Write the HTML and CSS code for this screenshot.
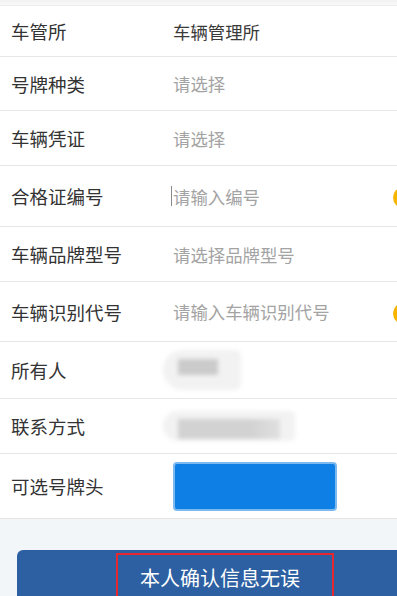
FILE: index.html
```html
<!DOCTYPE html>
<html lang="zh-CN">
<head>
    <meta charset="UTF-8">
    <title>车辆信息确认</title>
    <link rel="stylesheet" href="styles.css">
</head>
<body>
    <div class="page">
        <div class="top-strip"></div>
        <div class="form">
            <div class="row row-h50">
                <div class="label">车管所</div>
                <div class="value">车辆管理所</div>
            </div>
            <div class="row row-h54">
                <div class="label">号牌种类</div>
                <div class="value placeholder">请选择</div>
            </div>
            <div class="row">
                <div class="label">车辆凭证</div>
                <div class="value placeholder">请选择</div>
            </div>
            <div class="row row-h61">
                <div class="label">合格证编号</div>
                <div class="value placeholder"><span class="caret"></span>请输入编号</div>
                <span class="dot"></span>
            </div>
            <div class="row">
                <div class="label">车辆品牌型号</div>
                <div class="value placeholder">请选择品牌型号</div>
            </div>
            <div class="row row-h60">
                <div class="label">车辆识别代号</div>
                <div class="value placeholder">请输入车辆识别代号</div>
                <span class="dot"></span>
            </div>
            <div class="row row-h57">
                <div class="label">所有人</div>
                <div class="value">
                    <div class="smudge smudge-name"><div class="smudge-dark"></div></div>
                </div>
            </div>
            <div class="row">
                <div class="label">联系方式</div>
                <div class="value">
                    <div class="smudge smudge-phone"><div class="smudge-dark"></div></div>
                </div>
            </div>
            <div class="row row-h65">
                <div class="label">可选号牌头</div>
                <div class="value">
                    <div class="plate-box"></div>
                </div>
            </div>
        </div>
        <div class="footer">
            <button class="confirm-btn"><span class="mark">本人确认信息无误</span></button>
        </div>
    </div>
</body>
</html>
```

FILE: styles.css
```css
html, body {
    margin: 0;
    padding: 0;
    background-color: #f3f6f9;
}
body {
    font-family: "Noto Sans CJK SC", "Noto Sans", sans-serif;
    color: #333;
}
.page {
    height: 596px;
    overflow: hidden;
}
.top-strip {
    height: 6px;
    box-sizing: border-box;
    background: linear-gradient(#f1f1f1, #fafafa);
    border-bottom: 1px solid #ececec;
}
.form {
    background-color: #fff;
}
.row {
    position: relative;
    display: grid;
    grid-template-columns: 162px 1fr;
    align-items: center;
    height: 55px;
    box-sizing: border-box;
    padding-left: 11px;
    border-bottom: 1px solid #e6e6e6;
    overflow: hidden;
}
.row-h50 { height: 51px; }
.row-h54 { height: 54px; }
.row-h57 { height: 57px; }
.row-h60 { height: 60px; }
.row-h61 { height: 61px; }
.row-h65 { height: 65px; }
.label {
    font-size: 18.5px;
    color: #333;
}
.value {
    font-size: 17.4px;
    color: #3a3a3a;
    display: flex;
    align-items: center;
}
.placeholder {
    color: #a3a3a3;
}
.caret {
    display: inline-block;
    width: 1px;
    height: 20px;
    margin-left: -2px;
    margin-right: 1px;
    background-color: #888;
}
.dot {
    position: absolute;
    right: -17px;
    top: 50%;
    width: 21px;
    height: 21px;
    margin-top: -9px;
    border-radius: 50%;
    background-color: #f7b500;
}
.smudge {
    position: relative;
    margin-left: -10px;
    background-color: #f2f2f2;
    border-radius: 20px 6px 6px 20px;
    filter: blur(2px);
}
.smudge-name {
    width: 78px;
    height: 40px;
}
.smudge-phone {
    width: 132px;
    height: 30px;
}
.smudge-dark {
    position: absolute;
    left: 15px;
    background-color: #cbcbcb;
}
.smudge-name .smudge-dark {
    top: 9px;
    width: 40px;
    height: 16px;
}
.smudge-phone .smudge-dark {
    top: 8px;
    width: 102px;
    height: 20px;
    background: linear-gradient(90deg, #d2d2d2 0, #d2d2d2 70%, #e0e0e0 100%);
}
.plate-box {
    width: 164px;
    height: 49px;
    box-sizing: border-box;
    background-color: #0e7fe4;
    border: 2px solid #7db9ee;
    border-radius: 4px;
}
.footer {
    padding: 31px 0 0 17px;
}
.confirm-btn {
    display: block;
    width: 100%;
    height: 60px;
    padding: 3px 0 0 36px;
    border: none;
    border-radius: 6px 0 0 0;
    background-color: #2c60a2;
    color: #fff;
    font-family: "Noto Sans CJK SC", "Noto Sans", sans-serif;
    font-size: 20px;
    text-align: center;
    cursor: pointer;
}
.mark {
    display: inline-block;
    padding: 9px 32px 20px 22px;
    border: 2px solid #e8262d;
    line-height: 28px;
}
```
